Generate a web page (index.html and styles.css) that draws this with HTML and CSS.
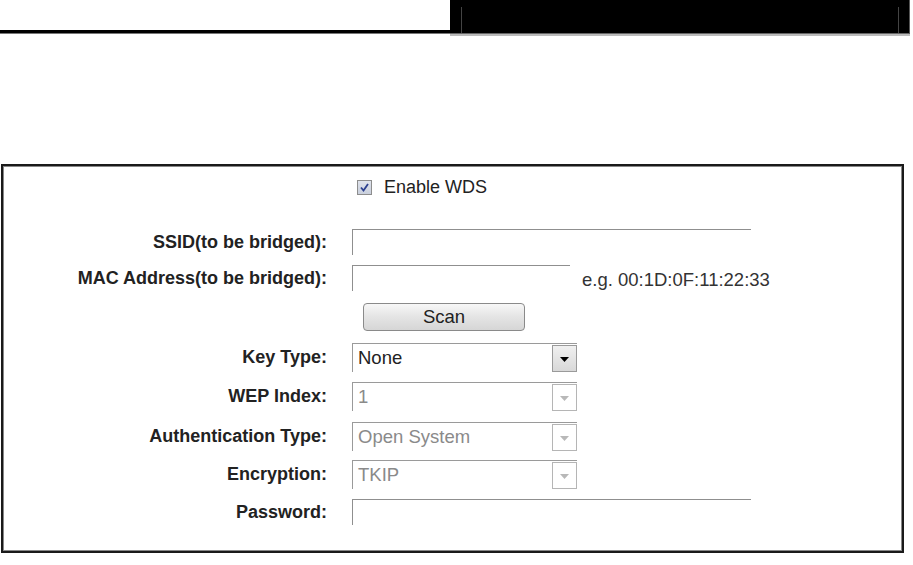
FILE: index.html
```html
<!DOCTYPE html>
<html>
<head>
<meta charset="utf-8">
<link rel="stylesheet" href="styles.css">
</head>
<body>
<div class="header">
  <div class="rule"></div>
  <div class="tab"><div class="tab-inner"></div></div>
</div>
<div class="panel">
  <div class="row row-check">
    <span></span>
    <label class="check"><span class="box"><svg width="11" height="11" viewBox="0 0 11 11"><path d="M2 5.5 L4.5 8.5 L9 2" fill="none" stroke="#2b3f8f" stroke-width="1.8"/></svg></span>Enable WDS</label>
  </div>
  <div class="row row-ssid">
    <span class="lbl">SSID(to be bridged):</span>
    <span class="field"><span class="input wide"></span></span>
  </div>
  <div class="row row-mac">
    <span class="lbl">MAC Address(to be bridged):</span>
    <span class="field"><span class="input narrow"></span><span class="hint">e.g. 00:1D:0F:11:22:33</span></span>
  </div>
  <div class="row row-scan">
    <span></span>
    <span class="field"><span class="btn">Scan</span></span>
  </div>
  <div class="row row-key">
    <span class="lbl">Key Type:</span>
    <span class="field"><span class="select"><span class="val">None</span><span class="arrow"><svg width="9" height="5" viewBox="0 0 9 5"><path d="M0 0 H9 L4.5 5 Z" fill="#000"/></svg></span></span></span>
  </div>
  <div class="row row-wep">
    <span class="lbl">WEP Index:</span>
    <span class="field"><span class="select dis"><span class="val">1</span><span class="arrow"><svg width="9" height="5" viewBox="0 0 9 5"><path d="M0 0 H9 L4.5 5 Z" fill="#b8b8b8"/></svg></span></span></span>
  </div>
  <div class="row row-auth">
    <span class="lbl">Authentication Type:</span>
    <span class="field"><span class="select dis"><span class="val">Open System</span><span class="arrow"><svg width="9" height="5" viewBox="0 0 9 5"><path d="M0 0 H9 L4.5 5 Z" fill="#b8b8b8"/></svg></span></span></span>
  </div>
  <div class="row row-enc">
    <span class="lbl">Encryption:</span>
    <span class="field"><span class="select dis"><span class="val">TKIP</span><span class="arrow"><svg width="9" height="5" viewBox="0 0 9 5"><path d="M0 0 H9 L4.5 5 Z" fill="#b8b8b8"/></svg></span></span></span>
  </div>
  <div class="row row-pass">
    <span class="lbl">Password:</span>
    <span class="field"><span class="input wide"></span></span>
  </div>
</div>
</body>
</html>
```
FILE: styles.css
```css
html, body {
  margin: 0;
  padding: 0;
  background: #fff;
}
body {
  font-family: "Liberation Sans", Arial, sans-serif;
  color: #222;
}
.header {
  display: flex;
  align-items: flex-end;
  height: 34px;
  width: 910px;
}
.rule {
  width: 450px;
  height: 3px;
  background: #000;
  border-bottom: 1px solid #777;
}
.tab {
  flex: 1;
  height: 34px;
  background: #000;
  border-bottom: 1px solid #666;
  border-right: 1px solid #555;
  padding: 7px 10px 0 11px;
  box-sizing: border-box;
  display: flex;
  box-shadow: 0 2px 0 #bbb;
}
.tab-inner {
  flex: 1;
  border-left: 1px solid #444;
  border-right: 1px solid #444;
}
.panel {
  margin: 130px 0 0 1px;
  width: 903px;
  height: 389px;
  box-sizing: border-box;
  border: 2px solid #1a1a1a;
  box-shadow: inset 0 0 0 1px #888;
}
.row {
  display: grid;
  grid-template-columns: 324px 1fr;
  column-gap: 25px;
  align-items: center;
}
.lbl {
  text-align: right;
  font-weight: bold;
  font-size: 18px;
  color: #222;
}
.field {
  display: flex;
  align-items: center;
}
.row-check { margin-top: 11px; height: 18px; }
.row-ssid { margin-top: 34px; height: 26px; }
.row-mac { margin-top: 10px; height: 26px; }
.row-scan { margin-top: 12px; height: 28px; }
.row-key { margin-top: 12px; height: 29px; }
.row-wep { margin-top: 10px; height: 29px; }
.row-auth { margin-top: 11px; height: 28px; }
.row-enc { margin-top: 10px; height: 28px; }
.row-pass { margin-top: 11px; height: 26px; }
.check {
  display: flex;
  align-items: center;
  font-size: 18px;
  color: #222;
  margin-left: 5px;
}
.box {
  width: 13px;
  height: 13px;
  border: 1px solid #8d8d8d;
  background: linear-gradient(#dfe3ec, #c9cfdc);
  margin-right: 12px;
  display: flex;
  align-items: center;
  justify-content: center;
}
.input {
  display: block;
  height: 26px;
  box-sizing: border-box;
  border-top: 1px solid #8f8f8f;
  border-left: 1px solid #8f8f8f;
}
.input.wide { width: 399px; }
.input.narrow { width: 218px; }
.hint {
  margin-left: 12px;
  font-size: 18.5px;
  color: #333;
  padding-top: 3px;
}
.btn {
  margin-left: 11px;
  width: 162px;
  height: 28px;
  box-sizing: border-box;
  border: 1px solid #8a8a8a;
  border-radius: 4px;
  background: linear-gradient(#f7f7f7, #e4e4e4 50%, #d6d6d6);
  display: flex;
  align-items: center;
  justify-content: center;
  font-size: 18.5px;
  color: #222;
}
.select {
  width: 225px;
  height: 29px;
  box-sizing: border-box;
  border-top: 1px solid #9a9a9a;
  border-left: 1px solid #9a9a9a;
  display: flex;
  align-items: center;
  justify-content: space-between;
  padding: 0 0 0 5px;
}
.val {
  font-size: 18.5px;
  color: #222;
}
.arrow {
  width: 25px;
  height: 27px;
  box-sizing: border-box;
  border: 1px solid #9a9a9a;
  background: linear-gradient(#f0f0f0, #d8d8d8);
  display: flex;
  align-items: center;
  justify-content: center;
  padding-top: 2px;
}
.select.dis .val { color: #8a8a8a; }
.select.dis .arrow {
  background: #fff;
  border-color: #b5b5b5;
}
```
